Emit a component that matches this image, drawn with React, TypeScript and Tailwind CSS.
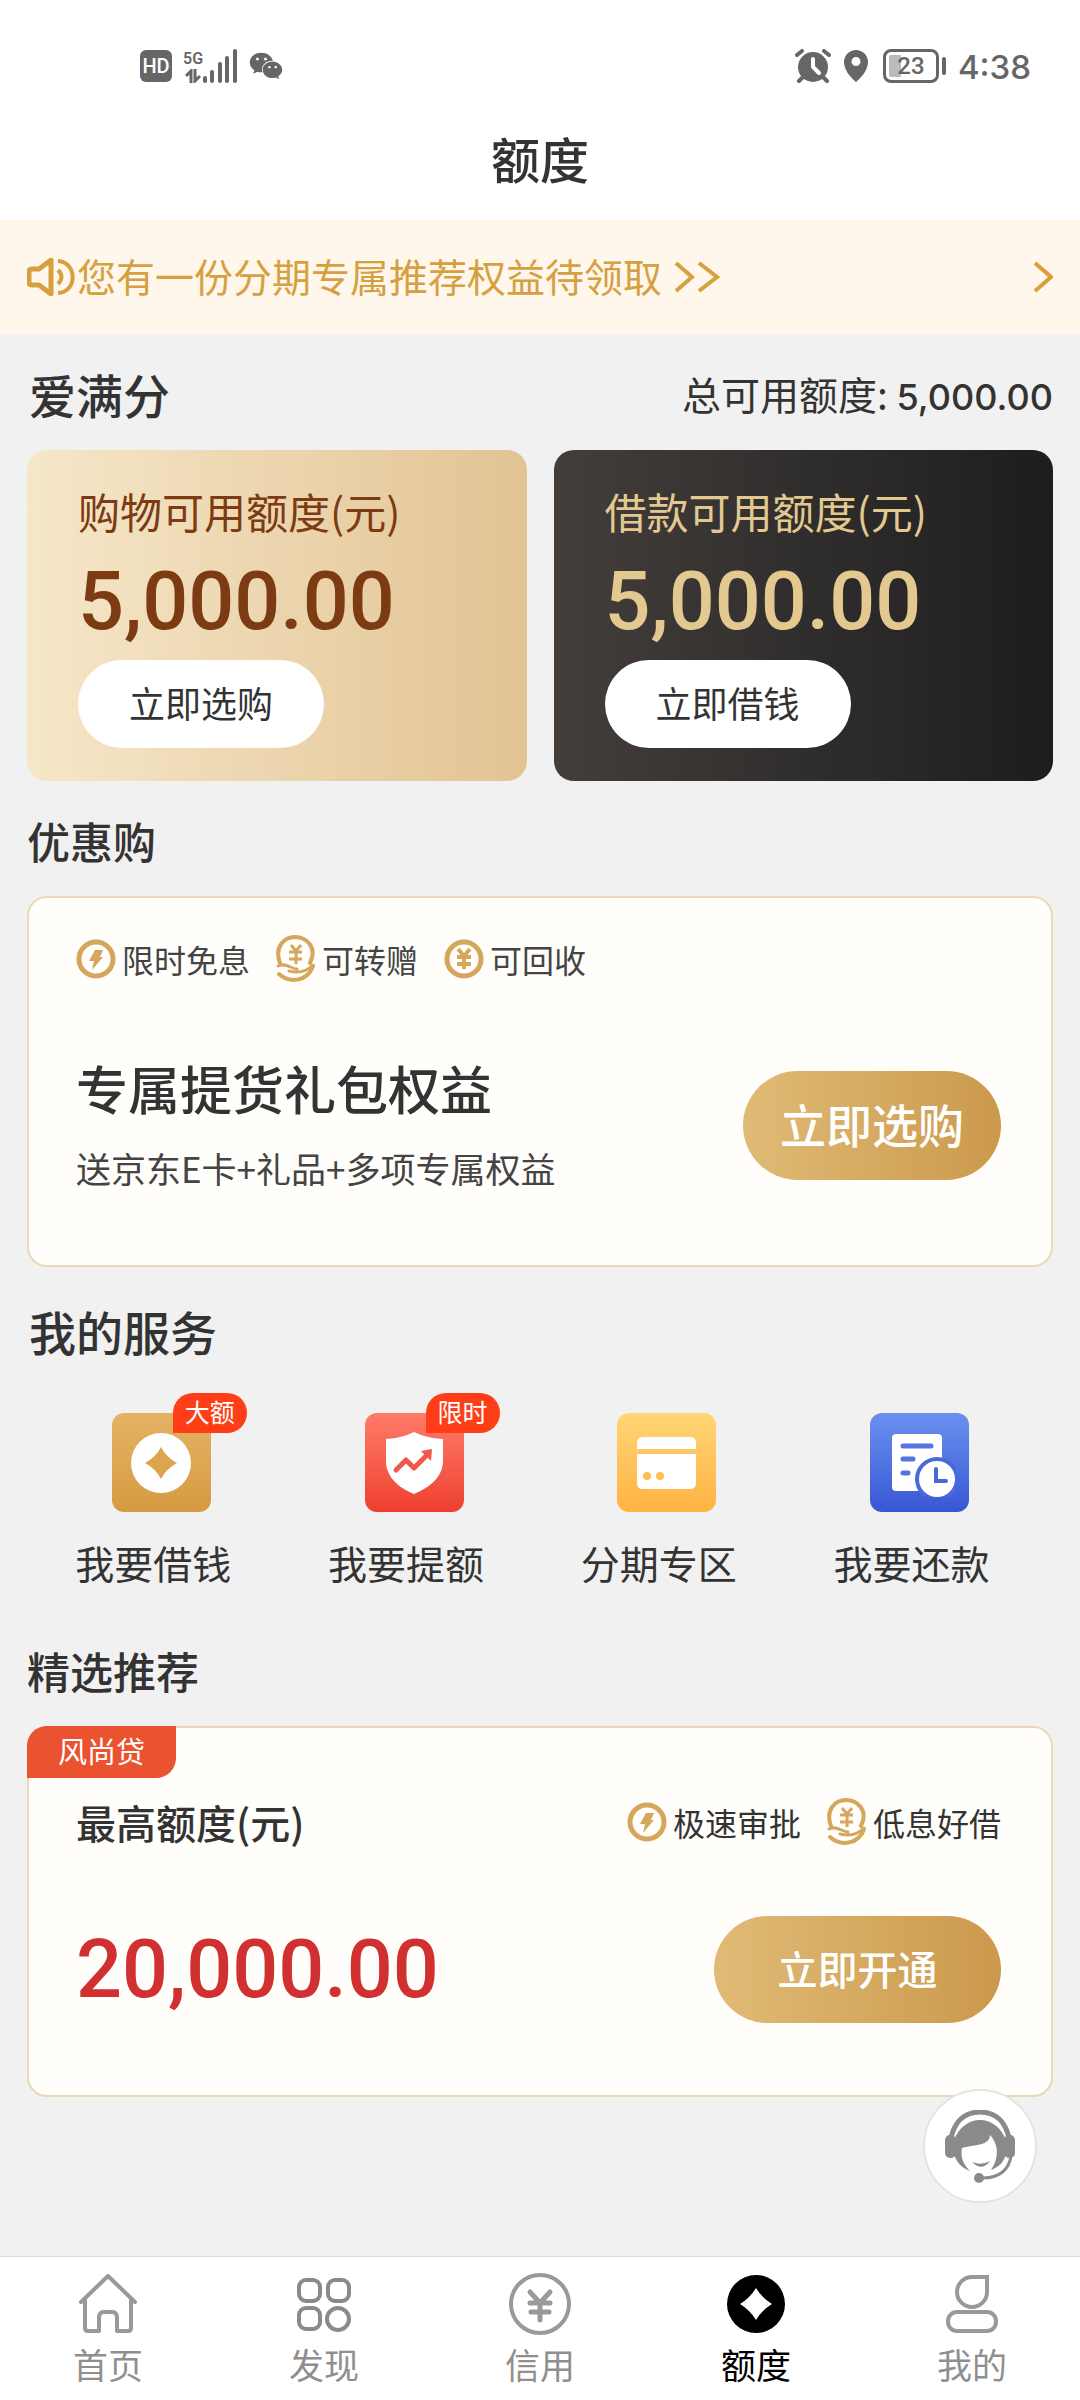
import type { ReactNode } from "react";
import { FaWeixin } from "react-icons/fa";

type Service = { label: string; icon: ReactNode; bg: string; badge?: string };
type Tab = { label: string; icon: ReactNode; active?: boolean };

const SpeakerIcon = () => (
  <svg width="48" height="38" viewBox="0 0 48 38" fill="none" stroke="#d6a041" strokeWidth="4">
    <path d="M24 2v34l-12-9H5q-3 0-3-3V14q0-3 3-3h7z" strokeLinejoin="round" strokeWidth="5" />
    <path d="M31 12q7 7 0 14M31 3c19 1 20 31 0 32" />
  </svg>
);

const ChevronIcon = ({ double = false }: { double?: boolean }) => (
  <svg width={double ? 46 : 20} height="32" viewBox={double ? "0 0 46 32" : "0 0 20 32"} fill="none" stroke="#d9a040" strokeWidth="4">
    <path d="M2 2l16 14L2 30" />
    {double && <path d="M25 2l18 14-18 14" />}
  </svg>
);

const BoltIcon = () => (
  <svg width="40" height="42" viewBox="0 0 40 42">
    <circle cx="20" cy="21" r="17" fill="none" stroke="#d5a75c" strokeWidth="5" />
    <path d="M19 12h8l-3 7h3L16 32l2-9h-5z" fill="#d5a75c" />
  </svg>
);

const YuanIcon = () => (
  <svg width="40" height="42" viewBox="0 0 40 42" fill="none" stroke="#d5a75c">
    <circle cx="20" cy="21" r="17" strokeWidth="5" />
    <path d="M14 11l6 7 6-7M13 19h14M13 26h14M20 18v13" strokeWidth="4" />
  </svg>
);

const HandCoinIcon = () => (
  <svg width="40" height="48" viewBox="0 0 40 48" fill="none" stroke="#d5a75c" strokeWidth="4" strokeLinecap="round">
    <path d="M4 28C-2 12 8 2 19 2s23 10 15 26" />
    <path d="M15 10l5 6 5-6M13 17h13M13 24h13M20 16v13" strokeWidth="3" strokeLinecap="butt" />
    <path d="M2 31c8-4 13 3 19 3M13 36c11 3 19-1 24-6" strokeWidth="3" />
    <path d="M3 39c11 10 29 7 34-8" />
  </svg>
);

const CoinIcon = () => (
  <svg width="60" height="60" viewBox="0 0 60 60">
    <circle cx="30" cy="30" r="30" fill="#fff" />
    <path d="M30 14q5 10 16 16-11 6-16 16-5-10-16-16 11-6 16-16z" fill="#dba64e" />
  </svg>
);

const ShieldIcon = () => (
  <svg width="57" height="62" viewBox="0 0 57 62">
    <path d="M28 0q12 6 29 7v22c0 16-14 27-29 33C13 56 0 45 0 29V7Q16 6 28 0z" fill="#fff" />
    <path d="M10 38l10-10 8 8 12-12" fill="none" stroke="#f0594a" strokeWidth="5" strokeLinecap="round" strokeLinejoin="round" />
    <path d="M35 19l11-2-1 12z" fill="#f0594a" />
  </svg>
);

const CardIcon = () => (
  <svg width="59" height="52" viewBox="0 0 59 52">
    <path d="M0 12V6q0-6 6-6h47q6 0 6 6v6zM0 17h59v29q0 6-6 6H6q-6 0-6-6z" fill="#fff" />
    <circle cx="10" cy="39" r="4" fill="#ffbf50" />
    <circle cx="23" cy="39" r="4" fill="#ffbf50" />
  </svg>
);

const BillIcon = () => (
  <svg width="72" height="68" viewBox="-8 -5 72 68">
    <rect width="50" height="57" rx="4" fill="#fff" />
    <path d="M11 12h28M11 25h10M11 39h5" stroke="#5674dd" strokeWidth="5" strokeLinecap="round" />
    <circle cx="45" cy="45" r="22" fill="#4a68dc" />
    <circle cx="45" cy="45" r="18" fill="#fff" />
    <path d="M44 35v12h10" fill="none" stroke="#4a68dc" strokeWidth="4" strokeLinecap="round" />
  </svg>
);

const HeadsetIcon = () => (
  <svg width="70" height="73" viewBox="0 0 70 73" fill="#8a8a8a">
    <path d="M6 28C10 10 21 2 35 2s25 8 29 26" fill="none" stroke="#8a8a8a" strokeWidth="5" />
    <rect y="25" width="11" height="23" rx="5" />
    <rect x="59" y="25" width="11" height="23" rx="5" />
    <path d="M9 30C14 17 24 10 35 10s21 7 26 20v14c-2 8-7 13-15 16 7-10 9-24-1-35-1 11-13 9-28 13-2 10 2 17 8 23-8-3-14-9-16-17z" />
    <path d="M27 52q9 4 18-1-8 11-18 1z" />
    <path d="M66 46c-2 14-12 22-28 22" fill="none" stroke="#8a8a8a" strokeWidth="3" />
    <circle cx="34" cy="68" r="5" />
  </svg>
);

const HomeIcon = () => (
  <svg width="60" height="60" viewBox="0 0 60 60" fill="none" stroke="#999" strokeWidth="4" strokeLinejoin="round" strokeLinecap="round">
    <path d="M3 28L30 2l27 26M7 26v28q0 3 3 3h11V44q0-6 5-6h8q5 0 5 6v13h11q3 0 3-3V26" />
  </svg>
);

const DiscoverIcon = () => (
  <svg width="54" height="60" viewBox="0 0 54 60" fill="none" stroke="#8a8a8a" strokeWidth="4">
    <rect x="2" y="6" width="21" height="21" rx="7" />
    <rect x="31" y="6" width="21" height="21" rx="7" />
    <rect x="2" y="34" width="21" height="21" rx="7" />
    <circle cx="41" cy="45" r="11" />
  </svg>
);

const CreditIcon = () => (
  <svg width="62" height="62" viewBox="0 0 62 62" fill="none" stroke="#999" strokeWidth="4">
    <circle cx="31" cy="31" r="29" />
    <path d="M21 19l10 11 10-11M21 30h20M22 39h18M31 30v17" strokeWidth="5" strokeLinecap="round" />
  </svg>
);

const QuotaIcon = () => (
  <svg width="60" height="60" viewBox="0 0 60 60">
    <circle cx="30" cy="30" r="29" fill="#000" />
    <path d="M30 14q6 10 16 16-10 6-16 16-6-10-16-16 10-6 16-16z" fill="#fff" />
  </svg>
);

const MeIcon = () => (
  <svg width="52" height="60" viewBox="0 0 52 60" fill="none" stroke="#999" strokeWidth="4">
    <path d="M41 3H26a15 15 0 1 0 15 15z" />
    <rect x="2" y="38" width="48" height="19" rx="9" />
  </svg>
);

const services: Service[] = [
  { label: "我要借钱", icon: <CoinIcon />, bg: "from-[#e4b364] to-[#d69a41]", badge: "大额" },
  { label: "我要提额", icon: <ShieldIcon />, bg: "from-[#ff7a68] to-[#ed3e2e]", badge: "限时" },
  { label: "分期专区", icon: <CardIcon />, bg: "from-[#ffd676] to-[#ffb240]" },
  { label: "我要还款", icon: <BillIcon />, bg: "from-[#6c8fee] to-[#3956d4]" },
];

const tabs: Tab[] = [
  { label: "首页", icon: <HomeIcon /> },
  { label: "发现", icon: <DiscoverIcon /> },
  { label: "信用", icon: <CreditIcon /> },
  { label: "额度", icon: <QuotaIcon />, active: true },
  { label: "我的", icon: <MeIcon /> },
];

const StatusBar = () => (
  <div className="flex h-[84px] items-end justify-between bg-white pr-[49px] pl-[140px] text-[#666]">
    <div className="flex h-9 items-center">
      <span className="flex h-8 w-8 items-center justify-center rounded-md bg-[#666] font-[Roboto,sans-serif] text-xl font-medium text-white">HD</span>
      <div className="ml-3 flex items-end">
        <div className="flex w-[18px] flex-col items-center">
          <span className="font-[Roboto,sans-serif] text-base leading-5 font-semibold">5G</span>
          <svg width="16" height="14" viewBox="0 0 16 14" fill="none" stroke="#666" strokeWidth="3">
            <path d="M6 14V2L1 7M10 0v12l5-5" />
          </svg>
        </div>
        <svg width="35" height="34" viewBox="0 0 35 34" stroke="#666" strokeWidth="4" strokeLinecap="round">
          <path d="M3 29v3M10 23v9M18 15v17M25 9v23M33 2v30" />
        </svg>
      </div>
      <FaWeixin className="ml-3 size-[34px]" />
    </div>
    <div className="flex h-9 items-center">
      <svg width="36" height="34" viewBox="0 0 36 34">
        <circle cx="18" cy="18" r="15" fill="#666" />
        <path d="M2 6l5-4M34 6l-5-4M4 32l5-5M32 32l-5-5" stroke="#666" strokeWidth="4" strokeLinecap="round" />
        <path d="M18 10v8l6 6" fill="none" stroke="#fff" strokeWidth="4" strokeLinecap="round" />
      </svg>
      <svg className="ml-3" width="26" height="32" viewBox="0 0 26 32">
        <path fillRule="evenodd" d="M13 0a12 12 0 0 1 12 12c0 7-5 14-12 20C6 26 1 19 1 12A12 12 0 0 1 13 0zm0 7a4 4 0 0 0 0 9 4 4 0 0 0 0-9z" fill="#666" />
      </svg>
      <span className="ml-[14px] flex h-[34px] w-14 items-center justify-center rounded-lg border-3 border-[#666] bg-linear-to-r from-[#bbb] from-30% to-white to-30% font-[Roboto,sans-serif] text-2xl leading-7 font-medium ring-3 ring-white ring-inset">23</span>
      <span className="ml-[3px] h-[18px] w-1 rounded-full bg-[#666]" />
      <span className="ml-3 pt-[2px] font-[Inter,sans-serif] text-[33px] leading-9 font-medium">4:38</span>
    </div>
  </div>
);

const QuotaCard = ({ title, action, className }: { title: string; action: string; className: string }) => (
  <div className={`flex flex-1 flex-col items-start gap-[14px] rounded-[20px] px-[51px] pt-[34px] pb-[33px] ${className}`}>
    <div>
      <h3 className="text-[42px] leading-[54px]">{title}</h3>
      <p className="mt-5 font-[Roboto,sans-serif] text-[81px] leading-[88px] font-medium">5,000.00</p>
    </div>
    <button className="h-[88px] w-[246px] rounded-full bg-white pb-1 text-[36px] text-[#333]">{action}</button>
  </div>
);

const Feature = ({ icon, label }: { icon: ReactNode; label: string }) => (
  <li className="flex items-center gap-[6px]">
    {icon}
    {label}
  </li>
);

const App = () => {
  return (
    <div className="flex min-h-screen flex-col bg-[#f1f1f1] font-['Noto_Sans_CJK_SC',sans-serif] text-[#333]">
      <StatusBar />
      <header className="bg-white pt-[38px] pb-[26px] text-center">
        <h1 className="text-[49px] leading-[72px] font-medium">额度</h1>
      </header>

      <a href="#" className="flex h-[114px] items-center bg-[#fff7eb] px-[27px] text-[39px] text-[#d6a041]">
        <SpeakerIcon />
        <span className="ml-[2px] pb-1">您有一份分期专属推荐权益待领取</span>
        <span className="ml-3 flex-1"><ChevronIcon double /></span>
        <ChevronIcon />
      </a>

      <main className="px-[27px] pb-[159px]">
        <div className="flex h-[116px] items-center justify-between pt-1">
          <h2 className="pl-[2px] text-[47px] font-medium">爱满分</h2>
          <p className="text-[39px]">
            总可用额度: <span className="font-[Inter,sans-serif] text-[36px] font-medium">5,000.00</span>
          </p>
        </div>
        <section className="flex gap-[27px]">
          <QuotaCard title="购物可用额度(元)" action="立即选购" className="bg-linear-to-r from-[#f6e7c9] to-[#e2c393] text-[#7c3b12]" />
          <QuotaCard title="借款可用额度(元)" action="立即借钱" className="bg-linear-to-r from-[#443e3b] via-[#302e2d] to-[#1e1d1e] text-[#e3c990]" />
        </section>

        <h2 className="pt-[27px] pb-6 text-[43px] leading-[64px] font-medium">优惠购</h2>
        <section className="rounded-[20px] border-2 border-[#ead9b9] bg-[#fffefa] pt-9 pr-[50px] pb-[57px] pl-[47px]">
          <ul className="flex h-[50px] items-center gap-[26px] text-[32px] text-[#444]">
            <Feature icon={<BoltIcon />} label="限时免息" />
            <Feature icon={<HandCoinIcon />} label="可转赠" />
            <Feature icon={<YuanIcon />} label="可回收" />
          </ul>
          <div className="mt-16 flex items-center justify-between">
            <div>
              <h3 className="text-[52px] leading-[80px] font-medium">专属提货礼包权益</h3>
              <p className="text-[35px] leading-[80px] text-[#444]">送京东E卡+礼品+多项专属权益</p>
            </div>
            <button className="mb-[6px] h-[109px] w-[258px] rounded-full bg-linear-to-r from-[#e0bb76] to-[#cb994c] pb-1 text-[46px] font-medium text-white">立即选购</button>
          </div>
        </section>

        <h2 className="pt-8 pb-[50px] pl-[2px] text-[47px] leading-[64px] font-medium">我的服务</h2>
        <section className="mr-[15px] grid grid-cols-4">
          {services.map((item) => (
            <a key={item.label} href="#" className="flex flex-col items-center gap-5">
              <div className="pl-4">
                <div className={`relative flex size-[99px] items-center justify-center rounded-xl bg-linear-to-b ${item.bg}`}>
                  {item.icon}
                  {item.badge && (
                    <span className="absolute -top-5 left-[61px] flex h-10 w-[74px] items-center justify-center rounded-[20px] rounded-bl-none bg-[#ff3e18] pb-[2px] text-[25px] text-white">
                      {item.badge}
                    </span>
                  )}
                </div>
              </div>
              <span className="text-[39px] leading-[60px]">{item.label}</span>
            </a>
          ))}
        </section>

        <h2 className="pt-[46px] pb-6 text-[43px] leading-[64px] font-medium">精选推荐</h2>
        <section className="relative rounded-[20px] border-2 border-[#ead9b9] bg-[#fffefa] pt-[66px] pr-[50px] pb-[72px] pl-[47px]">
          <span className="absolute -top-[2px] -left-[2px] flex h-[52px] w-[149px] items-center justify-center rounded-tl-[20px] rounded-br-[20px] bg-[#ea5230] pb-[2px] text-[29px] text-white">
            风尚贷
          </span>
          <div className="flex h-14 items-center justify-between">
            <h3 className="text-[40px] font-medium">最高额度(元)</h3>
            <ul className="flex items-center gap-[26px] text-[32px]">
              <Feature icon={<BoltIcon />} label="极速审批" />
              <Feature icon={<HandCoinIcon />} label="低息好借" />
            </ul>
          </div>
          <div className="mt-[66px] flex items-center justify-between">
            <p className="font-[Roboto,sans-serif] text-[81px] leading-[107px] font-medium text-[#d03030]">20,000.00</p>
            <button className="h-[107px] w-[287px] rounded-full bg-linear-to-r from-[#e0bb76] to-[#cb994c] pb-1 text-[40px] font-medium text-white">立即开通</button>
          </div>
        </section>
      </main>

      <button aria-label="客服" className="fixed right-[43px] bottom-[197px] z-10 flex size-[114px] items-center justify-center rounded-full border-2 border-[#e4e4e4] bg-white">
        <HeadsetIcon />
      </button>

      <nav className="sticky bottom-0 mt-auto grid grid-cols-5 border-t border-[#ddd] bg-white">
        {tabs.map((tab) => (
          <a key={tab.label} href="#" className={`flex h-36 flex-col items-center pt-4 text-[35px] ${tab.active ? "text-black" : "text-[#8f8f8f]"}`}>
            <span className="flex h-[62px] items-center">{tab.icon}</span>
            <span className="mt-1 leading-[50px]">{tab.label}</span>
          </a>
        ))}
      </nav>
    </div>
  );
};

export default App;
